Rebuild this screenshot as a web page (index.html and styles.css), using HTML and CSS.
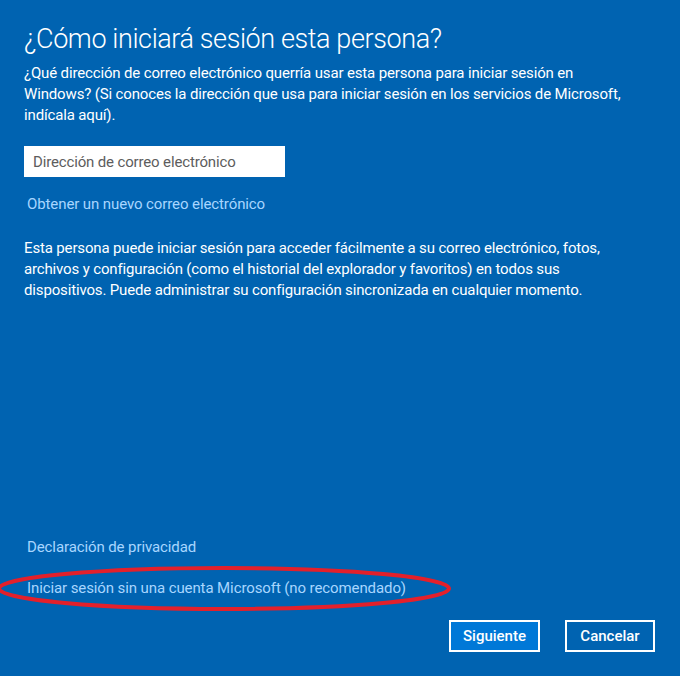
FILE: index.html
```html
<!DOCTYPE html>
<html lang="es">
<head>
<meta charset="UTF-8" />
<title>Cuenta de Microsoft</title>
<link rel="stylesheet" href="styles.css">
</head>
<body>
<div class="dialog">
  <div class="content">
    <h1>¿Cómo iniciará sesión esta persona?</h1>
    <p class="intro">¿Qué dirección de correo electrónico querría usar esta persona para iniciar sesión en Windows? (Si conoces la dirección que usa para iniciar sesión en los servicios de Microsoft, indícala aquí).</p>

    <input type="text" class="email" placeholder="Dirección de correo electrónico">
    <a href="#" class="link new-mail">Obtener un nuevo correo electrónico</a>

    <p class="info">Esta persona puede iniciar sesión para acceder fácilmente a su correo electrónico, fotos, archivos y configuración (como el historial del explorador y favoritos) en todos sus dispositivos. Puede administrar su configuración sincronizada en cualquier momento.</p>
  </div>

  <div class="footer">
    <a href="#" class="link">Declaración de privacidad</a>
    <div class="local-row">
      <a href="#" class="link">Iniciar sesión sin una cuenta Microsoft (no recomendado)</a>
      <svg class="circle" width="460" height="48" viewBox="0 0 460 48">
        <ellipse cx="227" cy="23.5" rx="225" ry="20.5" fill="none" stroke="#e3202b" stroke-width="4"/>
      </svg>
    </div>
    <div class="buttons">
      <button class="btn primary">Siguiente</button>
      <button class="btn">Cancelar</button>
    </div>
  </div>
</div>
</body>
</html>
```

FILE: styles.css
```css
html, body {
  margin: 0;
  height: 100%;
}
body {
  background: #0063b1;
  color: #fff;
  font-family: Roboto, "Noto Sans", sans-serif;
  font-size: 15px;
  overflow: hidden;
}
.dialog {
  height: 676px;
  display: flex;
  flex-direction: column;
  box-sizing: border-box;
  padding: 21px 25px 24px 24px;
}
.content {
  display: flex;
  flex-direction: column;
  align-items: flex-start;
  width: 606px;
}
h1 {
  margin: 0;
  font-size: 27px;
  font-weight: 300;
  line-height: 36px;
  letter-spacing: -0.4px;
}
p {
  margin: 0;
  line-height: 21px;
  letter-spacing: -0.15px;
}
.intro {
  margin-top: 6px;
}
.email {
  margin-top: 20px;
  width: 261px;
  height: 31px;
  box-sizing: border-box;
  border: none;
  padding: 0 9px;
  font-family: inherit;
  font-size: 15px;
  letter-spacing: -0.15px;
  color: #333;
  outline: none;
}
.email::placeholder {
  color: #5d5d5d;
}
.link {
  color: #a8d6ff;
  text-decoration: none;
  line-height: 21px;
  letter-spacing: -0.1px;
  margin-left: 3px;
}
.new-mail {
  margin-top: 17px;
}
.info {
  margin-top: 23px;
}
.footer {
  margin-top: auto;
  display: flex;
  flex-direction: column;
  align-items: flex-start;
}
.local-row {
  position: relative;
  margin-top: 20px;
}
.circle {
  position: absolute;
  left: -27px;
  top: -13px;
  pointer-events: none;
}
.buttons {
  align-self: flex-end;
  display: flex;
  gap: 25px;
  margin-top: 21px;
}
.btn {
  min-width: 90px;
  height: 32px;
  padding: 0 12px;
  border: 2px solid #fff;
  background: #0063b1;
  color: #fff;
  font-family: inherit;
  font-size: 15px;
  font-weight: 500;
  cursor: pointer;
}
.btn.primary {
  background: #0078d7;
}
```
